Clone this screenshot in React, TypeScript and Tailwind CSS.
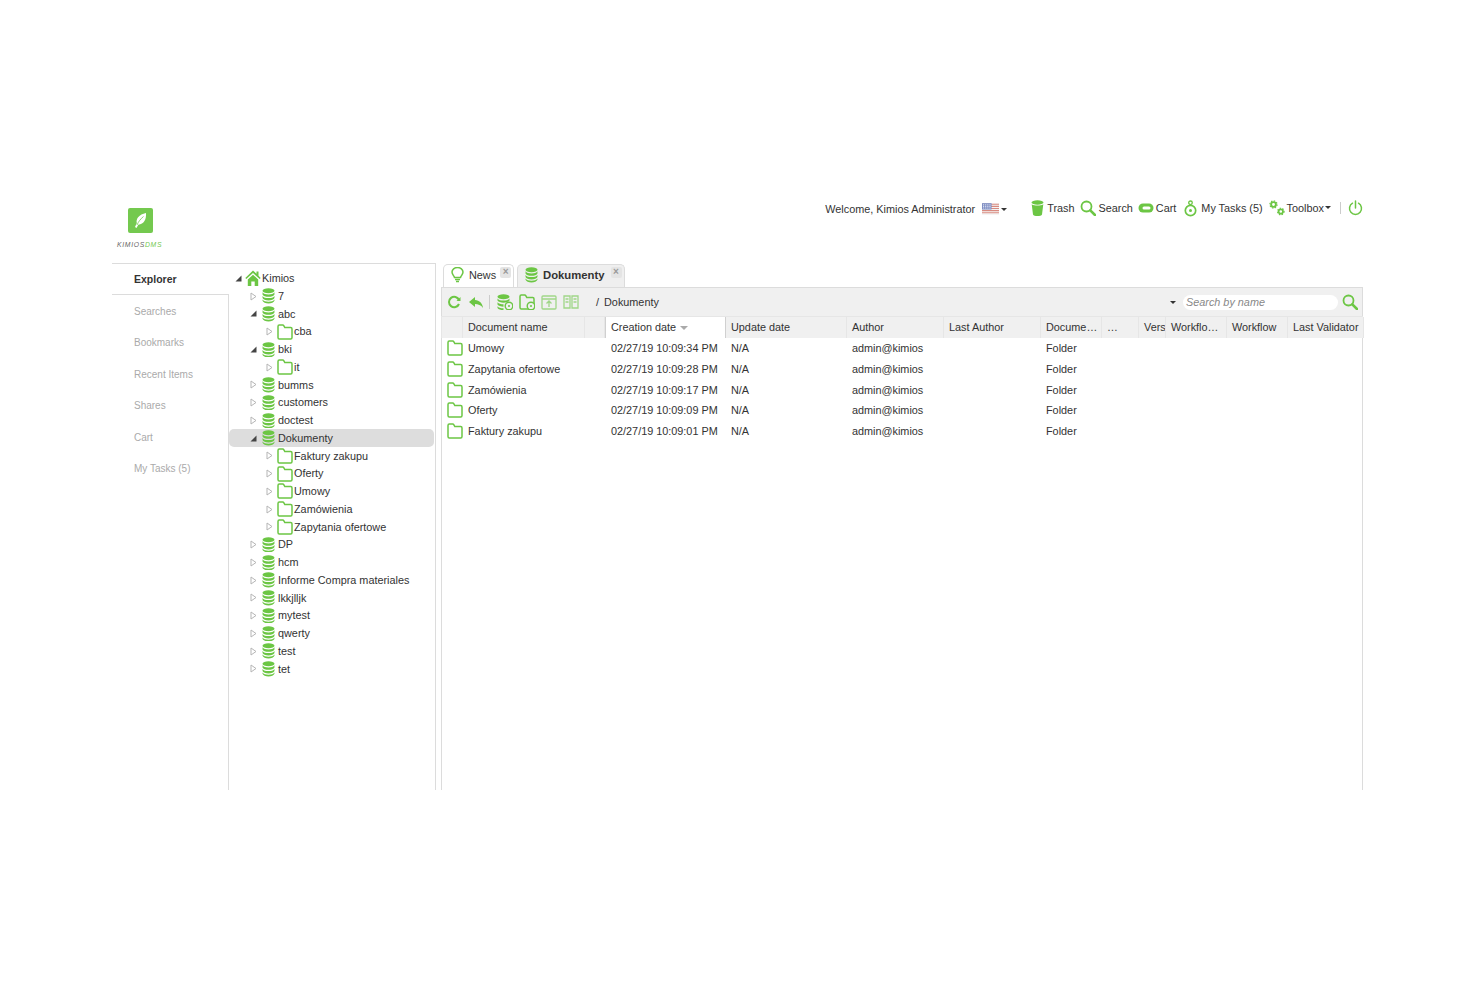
import type { ReactNode } from "react";

const GREEN = "#6cc644";

// ── Icons ──────────────────────────────────────────────
function DbIcon({ size = 13 }: { size?: number }) {
  return (
    <svg width={size} height={size * 1.2} viewBox="0 0 14 17" className="shrink-0">
      <ellipse cx="7" cy="3" rx="6.500" ry="2.800" fill={GREEN} />
      <path d="M.5 4.600C1.500 6.400 4 7 7 7s5.500-.6 6.500-2.400V7C13 8.800 10 9.500 7 9.500S1 8.800.5 7z" fill={GREEN} />
      <path d="M.5 8.600C1.500 10.300 4 11 7 11s5.500-.7 6.500-2.400V11c-.5 1.800-3.500 2.500-6.500 2.500S1 12.800.5 11z" fill={GREEN} />
      <path d="M.5 12.600C1.500 14.200 4 15 7 15s5.500-.8 6.500-2.400V14c-.5 1.800-3.500 2.800-6.500 2.800S1 15.800.5 14z" fill={GREEN} />
    </svg>
  );
}

function FolderIcon() {
  return (
    <svg width="16" height="16" viewBox="0 0 16 16" fill="none" className="shrink-0">
      <path d="M1 13.500V2.500C1 1.700 1.500 1 2.300 1h3.400c.6 0 .9.300 1.200.8L7.800 3.500h5.900c.8 0 1.300.6 1.300 1.400v8.600c0 .8-.5 1.500-1.300 1.500H2.300C1.500 15 1 14.300 1 13.500z" stroke={GREEN} strokeWidth="1.500" />
    </svg>
  );
}

function ClockBadge() {
  return (
    <>
      <circle cx="12" cy="12" r="3.800" fill="#f0f0f0" stroke={GREEN} strokeWidth="1.400" />
      <circle cx="12" cy="12" r="1" fill={GREEN} />
    </>
  );
}

function Expander({ open }: { open?: boolean }) {
  if (open) {
    return (
      <svg width="7" height="7" viewBox="0 0 7 7" className="shrink-0">
        <path d="M6.500 .5v6H.5z" fill="#444" />
      </svg>
    );
  }
  return (
    <svg width="7" height="9" viewBox="0 0 7 9" fill="none" className="shrink-0">
      <path d="M1 1l5 3.500L1 8z" stroke="#b5b5b5" />
    </svg>
  );
}

function HomeIcon() {
  return (
    <svg width="16" height="16" viewBox="0 0 16 16" className="shrink-0">
      <path d="M8 .5L.3 8l1 1L8 3l6.700 6 1-1-2.200-2.200V1.500h-2v2.300z" fill={GREEN} />
      <path d="M2.800 9.500L8 4.700l5.200 4.800V16H9.700v-4.500H6.300V16H2.800z" fill={GREEN} />
    </svg>
  );
}

function SearchIcon({ size = 16 }: { size?: number }) {
  return (
    <svg width={size} height={size} viewBox="0 0 16 16" fill="none" className="shrink-0">
      <circle cx="6.500" cy="6.500" r="5" stroke={GREEN} strokeWidth="1.800" />
      <path d="M10.300 10.300L15 15" stroke={GREEN} strokeWidth="2.600" strokeLinecap="round" />
    </svg>
  );
}

function TrashIcon() {
  return (
    <svg width="13" height="16" viewBox="0 0 13 16" className="shrink-0">
      <ellipse cx="6.500" cy="2.500" rx="6" ry="2.200" fill={GREEN} />
      <path d="M.7 4.200C2 5.300 4.500 5.600 6.500 5.600s4.500-.3 5.800-1.400L11 14.500c-.3 1-2.500 1.500-4.500 1.500s-4.200-.5-4.500-1.500z" fill={GREEN} />
    </svg>
  );
}

function CartIcon() {
  return (
    <svg width="16" height="10" viewBox="0 0 16 10" fill="none" className="shrink-0">
      <rect x=".5" y=".5" width="15" height="9" rx="4.500" fill={GREEN} />
      <rect x="4.500" y="3.500" width="8" height="3" rx="1.500" fill="#fff" />
    </svg>
  );
}

function TasksIcon() {
  return (
    <svg width="13" height="17" viewBox="0 0 13 17" fill="none" className="shrink-0">
      <circle cx="6.500" cy="10.500" r="5.200" stroke={GREEN} strokeWidth="1.700" />
      <circle cx="6.500" cy="10.500" r="1.500" fill={GREEN} />
      <circle cx="6.500" cy="2.800" r="1.800" stroke={GREEN} strokeWidth="1.300" />
    </svg>
  );
}

function Gear({ cx, cy, r }: { cx: number; cy: number; r: number }) {
  return (
    <>
      <circle cx={cx} cy={cy} r={r} fill="none" stroke={GREEN} strokeWidth={r * 0.8} />
      <circle cx={cx} cy={cy} r={r + r * 0.5} fill="none" stroke={GREEN} strokeWidth={r * 0.5} strokeDasharray="1.400 1.400" />
    </>
  );
}

function ToolboxIcon() {
  return (
    <svg width="16" height="16" viewBox="0 0 16 16" className="shrink-0">
      <Gear cx={4.500} cy={4.500} r={2.400} />
      <Gear cx={11.800} cy={11.500} r={2.200} />
    </svg>
  );
}

function PowerIcon() {
  return (
    <svg width="15" height="16" viewBox="0 0 15 16" fill="none" className="shrink-0">
      <path d="M4.500 3.200A6 6 0 1 0 10.500 3.200" stroke={GREEN} strokeWidth="1.500" strokeLinecap="round" />
      <path d="M7.500 1v7" stroke={GREEN} strokeWidth="1.500" strokeLinecap="round" />
    </svg>
  );
}

function FlagIcon() {
  return (
    <svg width="17" height="12" viewBox="0 0 16 11" className="shrink-0">
      <rect width="16" height="11" fill="#f4f4f4" />
      <path d="M0 1h16M0 3h16M0 5h16M0 7h16M0 9h16" stroke="#d98a80" strokeWidth="1" />
      <rect width="9" height="6" fill="#7f8fc4" />
      <path d="M1 1.500h7M1 3h7M1 4.500h7" stroke="#dfe3f2" strokeDasharray="1 1" />
    </svg>
  );
}

function Caret() {
  return <span className="ml-[1px] h-0 w-0 border-x-[3px] border-t-[3px] border-x-transparent border-t-[#333]" />;
}

function LogoIcon() {
  return (
    <svg width="25" height="25" viewBox="0 0 25 25">
      <rect width="25" height="25" rx="2" fill="#74c94f" />
      <path d="M7 19c.5-1.200 1-2.400 1.800-3.700C7.800 10.500 11 6.500 18 5c.5 6.500-2 11-7.700 11.800L8.500 20z" fill="#fff" />
      <path d="M9 17c1.500-3.500 3.500-6 6.500-8.500" stroke="#74c94f" strokeWidth=".8" fill="none" />
    </svg>
  );
}

function CloseTab() {
  return (
    <span className="flex h-[11px] w-[11px] items-center justify-center rounded-[2px] bg-[#e4e4e4] text-[10px] font-bold leading-none text-[#999]">
      ×
    </span>
  );
}

// ── Tree ───────────────────────────────────────────────
type TreeRow = { label: string; level: number; folder?: boolean; open?: boolean; selected?: boolean };

const TREE: TreeRow[] = [
  { label: "7", level: 1 },
  { label: "abc", level: 1, open: true },
  { label: "cba", level: 2, folder: true },
  { label: "bki", level: 1, open: true },
  { label: "it", level: 2, folder: true },
  { label: "bumms", level: 1 },
  { label: "customers", level: 1 },
  { label: "doctest", level: 1 },
  { label: "Dokumenty", level: 1, open: true, selected: true },
  { label: "Faktury zakupu", level: 2, folder: true },
  { label: "Oferty", level: 2, folder: true },
  { label: "Umowy", level: 2, folder: true },
  { label: "Zamówienia", level: 2, folder: true },
  { label: "Zapytania ofertowe", level: 2, folder: true },
  { label: "DP", level: 1 },
  { label: "hcm", level: 1 },
  { label: "Informe Compra materiales", level: 1 },
  { label: "lkkjlljk", level: 1 },
  { label: "mytest", level: 1 },
  { label: "qwerty", level: 1 },
  { label: "test", level: 1 },
  { label: "tet", level: 1 },
];

const MENU = ["Searches", "Bookmarks", "Recent Items", "Shares", "Cart", "My Tasks (5)"];

// ── Table ──────────────────────────────────────────────
const COLUMNS: { label: string; width: string; sorted?: boolean }[] = [
  { label: "", width: "w-[21px]" },
  { label: "Document name", width: "w-[122px]" },
  { label: "", width: "w-[20px]" },
  { label: "Creation date", width: "w-[121px]", sorted: true },
  { label: "Update date", width: "w-[121px]" },
  { label: "Author", width: "w-[97px]" },
  { label: "Last Author", width: "w-[97px]" },
  { label: "Docume…", width: "w-[61px]" },
  { label: "…", width: "w-[37px]" },
  { label: "Vers", width: "w-[27px]" },
  { label: "Workflo…", width: "w-[61px]" },
  { label: "Workflow", width: "w-[61px]" },
  { label: "Last Validator", width: "w-[76px]" },
];

const DOCS = [
  ["Umowy", "02/27/19 10:09:34 PM"],
  ["Zapytania ofertowe", "02/27/19 10:09:28 PM"],
  ["Zamówienia", "02/27/19 10:09:17 PM"],
  ["Oferty", "02/27/19 10:09:09 PM"],
  ["Faktury zakupu", "02/27/19 10:09:01 PM"],
];

function HeaderLink({ icon, label }: { icon: ReactNode; label: ReactNode }) {
  return (
    <span className="flex items-center gap-[2px]">
      {icon}
      <span>{label}</span>
    </span>
  );
}

export default function App() {
  return (
    <div className="h-[987px] bg-white pt-[205px] font-['Liberation_Sans',Arial,sans-serif] text-[10.850px] text-[#333]">
      <div className="ml-[112px] w-[1251px]">
        {/* Header */}
        <div className="flex h-[58px]">
          <div className="ml-[5px] flex w-[60px] flex-col items-start">
            <div className="ml-[11px] mt-[3px]">
              <LogoIcon />
            </div>
            <div className="mt-[7px] text-[6.800px] italic tracking-[.7px] text-[#666]">
              KIMIOS<span className="text-[#74c94f]">DMS</span>
            </div>
          </div>
          <div className="ml-auto mt-[-4px] flex h-[16px] items-center">
            <span>Welcome, Kimios Administrator</span>
            <span className="ml-[7px] flex items-center">
              <FlagIcon />
              <span className="ml-[1px]" />
              <Caret />
            </span>
            <span className="ml-[24px] mt-[-2px] flex items-center gap-[5px]">
              <span className="mr-[1px]">
                <HeaderLink icon={<TrashIcon />} label={<span className="ml-[1px]">Trash</span>} />
              </span>
              <HeaderLink icon={<SearchIcon />} label="Search" />
              <HeaderLink icon={<CartIcon />} label="Cart" />
              <span className="ml-[3px]">
                <HeaderLink icon={<TasksIcon />} label={<span className="ml-[2px]">My Tasks (5)</span>} />
              </span>
              <span className="ml-[1px] flex items-center">
                <HeaderLink icon={<ToolboxIcon />} label="Toolbox" />
                <Caret />
              </span>
            </span>
            <span className="ml-[9px] mt-[-2px] h-[12px] w-px bg-[#ccc]" />
            <span className="ml-[7px] mt-[-2px]">
              <PowerIcon />
            </span>
          </div>
        </div>

        <div className="flex h-[527px]">
          {/* Left panel */}
          <div className="flex w-[324px] border-r border-t border-[#dcdcdc]">
            <div className="flex w-[117px] shrink-0 flex-col">
              <div className="flex h-[30px] items-center pl-[22px] pt-[2px] text-[10.500px] font-bold text-[#333]">Explorer</div>
              <div className="flex-1 border-r border-t border-[#dcdcdc] pt-[.5px] text-[10px]">
                {MENU.map((m) => (
                  <div key={m} className="flex h-[31.500px] items-center pl-[22px] text-[#aaa]">
                    {m}
                  </div>
                ))}
              </div>
            </div>
            <div className="flex-1 pr-px pt-[5.500px]">
              <div className="flex h-[17.750px] items-center pl-[6px]">
                <Expander open />
                <span className="ml-[3px]">
                  <HomeIcon />
                </span>
                <span className="ml-px">Kimios</span>
              </div>
              {TREE.map((row) => (
                <div
                  key={row.label}
                  className={
                    row.selected
                      ? "flex h-[17.750px] items-center rounded-[5px] bg-[#dddddd] pl-[21px]"
                      : row.level === 2
                        ? "flex h-[17.750px] items-center pl-[37px]"
                        : "flex h-[17.750px] items-center pl-[21px]"
                  }
                >
                  <span className="flex w-[7px] justify-center">
                    <Expander open={row.open} />
                  </span>
                  <span className={row.folder ? "ml-[4px]" : "ml-[5px]"}>
                    {row.folder ? <FolderIcon /> : <DbIcon />}
                  </span>
                  <span className={row.folder ? "ml-px" : "ml-[3px]"}>{row.label}</span>
                </div>
              ))}
            </div>
          </div>

          {/* Right panel */}
          <div className="ml-[5px] flex w-[922px] flex-col">
            {/* Tabs */}
            <div className="flex h-[24px] items-end pl-[2px]">
              <div className="flex h-[23px] w-[71px] items-center rounded-t-[5px] border border-b-0 border-[#dcdcdc] pb-[2px] pl-[7px]">
                <svg width="13" height="16" viewBox="0 0 13 16" fill="none" className="shrink-0">
                  <path d="M3.500 10.500C3 8.500 1 7.500 1 5a5.500 4.500 0 0 1 11 0c0 2.500-2 3.500-2.500 5.500z" stroke={GREEN} strokeWidth="1.500" />
                  <path d="M4 12.500h5M5 14.500h3" stroke={GREEN} strokeWidth="1.400" />
                </svg>
                <span className="ml-[5px]">News</span>
                <span className="mb-[6px] ml-[4px]">
                  <CloseTab />
                </span>
              </div>
              <div className="ml-[3px] flex h-[23px] w-[108px] items-center rounded-t-[5px] border border-b-0 border-[#dcdcdc] bg-[#efefef] pb-[2px] pl-[7px]">
                <DbIcon size={13} />
                <span className="ml-[5px] text-[11.300px] font-bold">Dokumenty</span>
                <span className="mb-[6px] ml-[6px]">
                  <CloseTab />
                </span>
              </div>
            </div>

            {/* Toolbar */}
            <div className="flex h-[29px] items-center border-l border-r border-t border-[#dcdcdc] bg-[#f0f0f0] pl-[5px]">
              <svg width="14" height="14" viewBox="0 0 14 14" fill="none" className="shrink-0">
                <path d="M12 9a5.200 5.200 0 1 1 0-4" stroke={GREEN} strokeWidth="2" />
                <path d="M13.500 2v4h-4z" fill={GREEN} />
              </svg>
              <svg width="16" height="13" viewBox="0 0 16 13" className="ml-[7px] shrink-0">
                <path d="M7 1L1 6l6 5V8c3 0 6 1 8 4-.5-5-3.500-7.500-8-8z" fill={GREEN} />
              </svg>
              <span className="ml-[5px] h-[14px] w-px bg-[#ccc]" />
              <svg width="16" height="16" viewBox="0 0 16 16" className="ml-[7px] shrink-0">
                <ellipse cx="6.500" cy="2.800" rx="6" ry="2.500" fill={GREEN} />
                <path d="M.5 4.400C1.500 6 4 6.600 6.500 6.600s5-.6 6-2.200v2.200c-1 1.500-3.500 2.100-6 2.100s-5-.6-6-2.100z" fill={GREEN} />
                <path d="M.5 8.200c1 1.500 3.500 2.100 6 2.100v2.400c-2.500 0-5-.6-6-2.100zM.5 12.200c1 1.400 3 2 6 2.100V16c-3 0-5-.7-6-2.100z" fill={GREEN} />
                <ClockBadge />
              </svg>
              <svg width="16" height="16" viewBox="0 0 16 16" fill="none" className="ml-[6px] shrink-0">
                <path d="M1 13.500V2.500C1 1.700 1.500 1 2.300 1h3.400c.6 0 .9.300 1.200.8L7.800 3.500h5.900c.8 0 1.300.6 1.300 1.400v8.600c0 .8-.5 1.500-1.300 1.500H2.300C1.500 15 1 14.300 1 13.500z" stroke={GREEN} strokeWidth="1.500" />
                <ClockBadge />
              </svg>
              <svg width="16" height="15" viewBox="0 0 16 15" fill="none" className="ml-[6px] shrink-0 opacity-60">
                <rect x="1" y="1" width="14" height="13" rx="1" stroke={GREEN} strokeWidth="1.300" />
                <path d="M1 4h14M8 12V6.500M5.500 8.500L8 6l2.500 2.500" stroke={GREEN} strokeWidth="1.300" />
              </svg>
              <svg width="16" height="14" viewBox="0 0 16 14" fill="none" className="ml-[6px] shrink-0 opacity-60">
                <path d="M1 1h6v12H1zM9 1h6v12H9zM2.500 4h3M2.500 7h3M10.500 4h3M10.500 7h3" stroke={GREEN} strokeWidth="1.300" />
              </svg>
              <span className="ml-[17px]">/</span>
              <span className="ml-[5px]">Dokumenty</span>
              <span className="ml-auto h-0 w-0 border-x-[3px] border-t-[3px] border-x-transparent border-t-[#333]" />
              <span className="ml-[7px] flex h-[15px] w-[155px] items-center rounded-[8px] bg-white pl-[3px] italic text-[#888]">
                Search by name
              </span>
              <span className="ml-[4px] mr-[4px]">
                <SearchIcon size={16} />
              </span>
            </div>

            {/* Table */}
            <div className="flex h-[22px] border-l border-t border-[#e6e6e6] bg-[#f0f0f0]">
              {COLUMNS.map((c, i) => (
                <div
                  key={i}
                  className={
                    c.sorted
                      ? `${c.width} flex shrink-0 items-center overflow-hidden whitespace-nowrap border-l border-r border-[#d0d0d0] bg-white pl-[5px]`
                      : `${c.width} flex shrink-0 items-center overflow-hidden whitespace-nowrap border-r border-[#e6e6e6] pl-[5px]`
                  }
                >
                  {c.label}
                  {c.sorted && (
                    <span className="ml-[4px] h-0 w-0 border-x-[4px] border-t-[4px] border-x-transparent border-t-[#aaa]" />
                  )}
                </div>
              ))}
            </div>
            <div className="flex-1 border-l border-r border-[#dcdcdc]">
              {DOCS.map(([name, date]) => (
                <div key={name} className="flex h-[20.700px] items-center">
                  <span className="flex w-[21px] shrink-0 justify-center pl-[4px]">
                    <FolderIcon />
                  </span>
                  <span className="w-[143px] shrink-0 pl-[5px]">{name}</span>
                  <span className="w-[120px] shrink-0 pl-[5px]">{date}</span>
                  <span className="w-[121px] shrink-0 pl-[5px]">N/A</span>
                  <span className="w-[194px] shrink-0 pl-[5px]">admin@kimios</span>
                  <span className="pl-[5px]">Folder</span>
                </div>
              ))}
            </div>
          </div>
        </div>
      </div>
    </div>
  );
}
